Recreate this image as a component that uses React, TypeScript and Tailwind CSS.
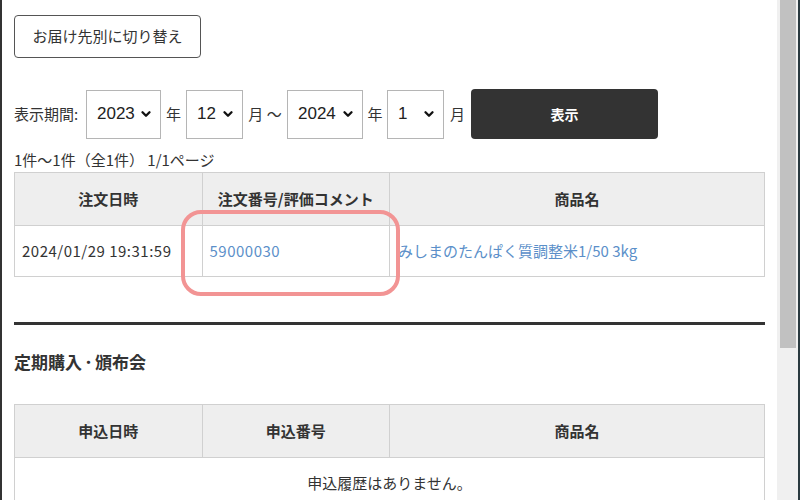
import { ChevronDown } from "lucide-react";

const font = { fontFamily: '"Noto Sans CJK JP", "Noto Sans", sans-serif' };

function Select({ value, width }: { value: string; width: string }) {
  return (
    <div className={`relative h-[49px] ${width} border border-[#b5b5b5] bg-white`}>
      <div className="flex h-full items-center pl-[10px] text-[17px] text-[#222] font-['Liberation_Sans',Arial,sans-serif]">
        {value}
      </div>
      <ChevronDown
        className="absolute right-[7px] top-1/2 -translate-y-1/2 text-[#111]"
        size={14}
        strokeWidth={4}
      />
    </div>
  );
}

function Table({
  heads,
  children,
}: {
  heads: string[];
  children: React.ReactNode;
}) {
  return (
    <table className="w-full table-fixed border-collapse text-[15px] text-[#333]">
      <colgroup>
        <col className="w-1/4" />
        <col className="w-1/4" />
        <col className="w-1/2" />
      </colgroup>
      <thead>
        <tr className="h-[53px] bg-[#eeeeee]">
          {heads.map((h) => (
            <th key={h} className="border border-[#d0d0d0] font-bold">
              {h}
            </th>
          ))}
        </tr>
      </thead>
      <tbody>{children}</tbody>
    </table>
  );
}

export default function App() {
  return (
    <div className="flex h-[500px] w-[800px] overflow-hidden bg-white" style={font}>
      <div className="w-[2px] bg-[#333]" />
      <div className="flex-1 px-[12px] pt-[15px] text-[#333]">
        <button className="h-[43px] w-[187px] rounded-[4px] border border-[#555] text-[15px] text-[#333]">
          お届け先別に切り替え
        </button>

        <div className="mt-[31px] flex items-center text-[15px]">
          <span className="w-[72px]">表示期間:</span>
          <Select value="2023" width="w-[75px]" />
          <span className="w-[25px] text-center">年</span>
          <Select value="12" width="w-[57px]" />
          <span className="w-[44px] text-center">月 ～</span>
          <Select value="2024" width="w-[76px]" />
          <span className="w-[24px] text-center">年</span>
          <Select value="1" width="w-[57px]" />
          <span className="w-[27px] text-center">月</span>
          <button className="h-[50px] w-[187px] rounded-[4px] bg-[#333] text-[14px] font-bold text-white">
            表示
          </button>
        </div>

        <div className="mt-[9px] text-[15px] leading-[24px]">1件～1件（全1件） 1/1ページ</div>

        <div className="relative">
          <Table heads={["注文日時", "注文番号/評価コメント", "商品名"]}>
            <tr className="h-[51px]">
              <td className="border border-[#d0d0d0] px-[7px] tracking-[0.5px]">2024/01/29 19:31:59</td>
              <td className="border border-[#d0d0d0] px-[7px] tracking-[0.5px] text-[#5b8fc9]">59000030</td>
              <td className="border border-[#d0d0d0] px-[8px] text-[#5b8fc9]">
                みしまのたんぱく質調整米1/50 3kg
              </td>
            </tr>
          </Table>
          <div className="pointer-events-none absolute left-[167px] top-[38px] h-[86px] w-[219px] rounded-[20px] border-[4px] border-[#f29494]" />
        </div>

        <div className="mt-[45px] h-[3px] bg-[#333]" />

        <h2 className="mt-[23px] flex items-center text-[17px] font-bold leading-[28px] text-[#333]">
          <span>定期購入</span>
          <span className="w-[13px] text-center text-[13px]">・</span>
          <span>頒布会</span>
        </h2>

        <div className="mt-[28px]">
          <Table heads={["申込日時", "申込番号", "商品名"]}>
            <tr className="h-[51px]">
              <td colSpan={3} className="border border-[#d0d0d0] text-center">
                申込履歴はありません。
              </td>
            </tr>
          </Table>
        </div>
      </div>
      <div className="flex w-[21px] justify-center bg-[#f0f0f0]">
        <div className="h-[348px] w-[16px] bg-[#c1c1c1]" />
      </div>
      <div className="w-[2px] bg-[#2a3a40]" />
    </div>
  );
}
